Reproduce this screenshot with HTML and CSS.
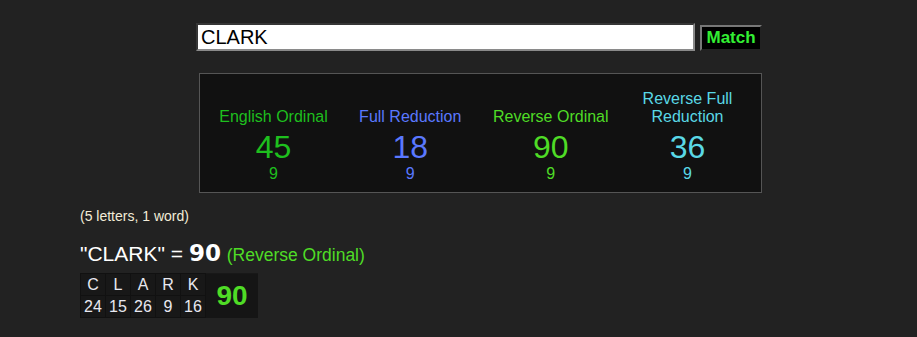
FILE: index.html
```html
<!DOCTYPE html>
<html lang="en">
<head>
<meta charset="UTF-8">
<title>Gematria - CLARK</title>
<link rel="stylesheet" href="styles.css">
</head>
<body>

<div id="calc">
    <form class="search" onsubmit="return false">
        <input type="text" class="phrase" value="CLARK">
        <button class="match">Match</button>
    </form>

    <table class="ciphers">
        <tr>
            <td class="eo"><div class="name">English Ordinal</div><div class="val">45</div><div class="red">9</div></td>
            <td class="fr"><div class="name">Full Reduction</div><div class="val">18</div><div class="red">9</div></td>
            <td class="ro"><div class="name">Reverse Ordinal</div><div class="val">90</div><div class="red">9</div></td>
            <td class="rfr"><div class="name">Reverse Full<br>Reduction</div><div class="val">36</div><div class="red">9</div></td>
        </tr>
    </table>
</div>

<div id="breakdown">
    <p class="count">(5 letters, 1 word)</p>
    <p class="result">"CLARK" = <b>90</b> <span class="cname">(Reverse Ordinal)</span></p>

    <table class="letters">
        <tr>
            <td>C</td><td>L</td><td>A</td><td>R</td><td>K</td>
            <td class="total" rowspan="2">90</td>
        </tr>
        <tr class="nums">
            <td>24</td><td>15</td><td>26</td><td>9</td><td>16</td>
        </tr>
    </table>
</div>

</body>
</html>
```

FILE: styles.css
```css
body {
    font-family: 'Liberation Sans', Arial, sans-serif;
    background-color: #222222;
    color: #ffffff;
    margin: 0;
    padding: 0;
}
#calc {
    width: 566px;
    margin: 0 0 0 196px;
    padding-top: 23px;
}
.search {
    display: flex;
    align-items: flex-end;
    gap: 5px;
    margin: 0;
}
.phrase {
    width: 500px;
    height: 28px;
    box-sizing: border-box;
    padding: 0 3px;
    border: 2px inset #8a8a8a;
    background-color: #ffffff;
    color: #000000;
    font-family: 'Liberation Sans', Arial, sans-serif;
    font-size: 20px;
    margin: 0;
}
.match {
    width: 62px;
    height: 26px;
    box-sizing: border-box;
    padding: 0;
    background-color: #000000;
    color: #33ee33;
    border: 2px outset #777777;
    font-family: 'Liberation Sans', Arial, sans-serif;
    font-weight: bold;
    font-size: 17px;
    cursor: pointer;
}
.ciphers {
    margin: 22px 0 0 3px;
    width: 563px;
    height: 120px;
    border: 1px solid #555555;
    background-color: #111111;
    border-collapse: collapse;
    table-layout: fixed;
}
.ciphers td {
    vertical-align: bottom;
    text-align: center;
    padding: 0 0 9px;
}
.ciphers tr td:first-child {
    padding-left: 7px;
}
.ciphers tr td:last-child {
    padding-right: 7px;
}
.name {
    font-size: 16px;
    line-height: 18px;
}
.val {
    font-size: 32px;
    line-height: 36px;
    margin-top: 3px;
}
.red {
    font-size: 16px;
    line-height: 18px;
}
.eo { color: #1ebf1e; }
.fr { color: #5a78ff; }
.ro { color: #4fdc26; }
.rfr { color: #5ad8e6; }
#breakdown {
    padding-left: 80px;
}
.count {
    margin: 15px 0 0;
    font-size: 14px;
    line-height: 16px;
    color: #f2ecd8;
}
.result {
    margin: 17px 0 0;
    font-size: 21px;
    line-height: 24px;
}
.result b {
    font-size: 23px;
    font-family: 'DejaVu Sans', 'Liberation Sans', sans-serif;
    font-weight: 900;
}
.cname {
    font-size: 17.5px;
    color: #4fdc26;
}
.letters {
    margin-top: 6px;
    border-collapse: collapse;
    background-color: #181818;
    font-size: 16px;
}
.letters td {
    width: 24px;
    height: 21px;
    padding: 0;
    text-align: center;
    border: 1px solid #111111;
    color: #e8e8f0;
}
.letters .nums td {
    height: 21px;
}
.letters .total {
    width: 52px;
    font-size: 28px;
    font-weight: bold;
    color: #4fdc26;
    border: none;
    background-color: #151515;
}
```
